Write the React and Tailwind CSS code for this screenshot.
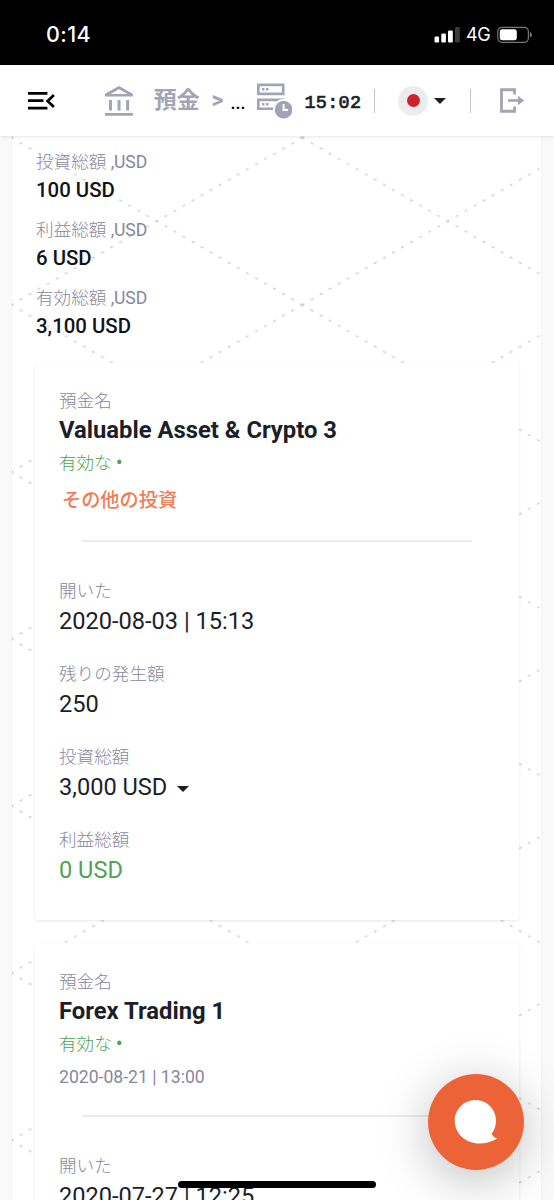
import React from 'react';

const deposits = [
  {
    name: 'Valuable Asset & Crypto 3',
    status: '有効な',
    link: 'その他の投資',
    rows: [
      { label: '開いた', value: '2020-08-03 | 15:13' },
      { label: '残りの発生額', value: '250' },
      { label: '投資総額', value: '3,000 USD', dropdown: true },
      { label: '利益総額', value: '0 USD', green: true },
    ],
  },
  {
    name: 'Forex Trading 1',
    status: '有効な',
    date: '2020-08-21 | 13:00',
    rows: [{ label: '開いた', value: '2020-07-27 | 12:25' }],
  },
];

const totals = [
  { label: '投資総額', value: '100 USD' },
  { label: '利益総額', value: '6 USD' },
  { label: '有効総額', value: '3,100 USD' },
];

const Caret = ({ className }) => (
  <svg className={className} width="12" height="6" viewBox="0 0 12 6">
    <path d="M0 0h12L6 6z" fill="currentColor" />
  </svg>
);

const StatusBar = () => (
  <div className="h-[65px] shrink-0 bg-black text-white flex items-center justify-between pl-[46px] pr-[21px] pt-1">
    <span className="font-['Inter'] font-medium text-[21.5px] tracking-[0.4px]">0:14</span>
    <div className="flex items-center">
      <svg width="26" height="16" viewBox="0 0 26 16" fill="#fff">
        <rect x="0.5" y="9.5" width="4.6" height="6" rx="1.2" />
        <rect x="7.3" y="6.5" width="4.6" height="9" rx="1.2" />
        <rect x="14" y="3.5" width="4.8" height="12" rx="1.2" />
        <rect x="21" y="0" width="4.8" height="15.5" rx="1.2" fill="#3b3b3b" />
      </svg>
      <span className="font-['Inter'] text-[18px] ml-[6px] mr-[7px] w-[24px] tracking-[-0.5px]">4G</span>
      <svg width="36" height="18" viewBox="0 0 36 18">
        <rect x="0.8" y="1.3" width="30.6" height="15" rx="4.2" fill="none" stroke="#777" strokeWidth="1.2" />
        <rect x="2.8" y="3.3" width="17" height="11" rx="2.4" fill="#fff" />
        <path d="M33 6c2.6 1 2.6 4.6 0 5.6z" fill="#777" />
      </svg>
    </div>
  </div>
);

const Header = () => (
  <header className="relative z-10 h-[71px] shrink-0 bg-white flex items-center pl-7 pr-[29px] text-[#a3a3b8] shadow-[0_1px_3px_rgba(0,0,0,0.1)]">
    <svg width="28" height="20" viewBox="0 0 28 20" fill="none" stroke="#000" strokeWidth="2.7">
      <path d="M0 2.3h19.500M0 9.7h15.500M0 17.2h19.500M26 4l-6.300 6L26 16" />
    </svg>
    <svg className="ml-[49px] mt-px" width="28" height="31" viewBox="0 0 28 31" fill="currentColor">
      <path
        d="M14 0l14 7.8V10.6H0V7.8zM14 3.2L5.5 8h17zM4 14h3v10.500H4zM12.600 14h3v10.500h-3zM21.200 14h3v10.500h-3zM0 27h28v2.800H0z"
        fillRule="evenodd"
      />
    </svg>
    <span className="ml-[21px] w-[48px] text-[23px] leading-none font-bold font-['Roboto','Noto_Sans_CJK_JP',sans-serif]">預金</span>
    <span className="ml-[10px] w-[13px] font-['Roboto',sans-serif] font-bold text-[23px] leading-none">&gt;</span>
    <span className="ml-[6px] w-[14px] mt-[3px] text-black font-medium text-[18px] font-['Roboto',sans-serif]">...</span>
    <svg className="ml-[12px]" width="36" height="36" viewBox="0 0 36 36">
      <g fill="none" stroke="currentColor" strokeWidth="2.7">
        <path d="M1.300 1.800h25v9h-25z" />
        <path d="M1.300 16.800h25v9h-25z" />
      </g>
      <path d="M5 5h2.500v2.500H5zM9 5h2.500v2.500H9zM5 20h2.500v2.500H5zM9 20h2.500v2.500H9z" fill="currentColor" />
      <circle cx="26.700" cy="26.700" r="9.800" fill="currentColor" stroke="#fff" strokeWidth="1.800" />
      <path d="M26.700 21v6h4.500" fill="none" stroke="#fff" strokeWidth="2" />
    </svg>
    <span className="ml-[12px] w-[58px] mt-[7px] text-[#1c1e28] font-medium text-[18.5px] leading-none font-['Liberation_Mono',monospace] [-webkit-text-stroke:0.7px] tracking-[0.3px]">15:02</span>
    <span className="ml-[12px] w-px h-6 bg-[#c5c5cf]" />
    <span className="ml-[23px] size-[30px] shrink-0 rounded-full bg-[#ececec] flex items-center justify-center">
      <span className="size-[13px] rounded-full bg-[#d0202f]" />
    </span>
    <Caret className="ml-[6px] text-[#1c1e28]" />
    <span className="ml-[24px] w-px h-6 bg-[#c5c5cf]" />
    <svg className="ml-[29px]" width="25" height="25" viewBox="0 0 25 25" fill="none" stroke="currentColor">
      <path d="M14.600 6.500V1.700H1.500v21.600h13.100v-4.800" strokeWidth="2.800" />
      <path d="M8 12.500h11" strokeWidth="2.600" />
      <path d="M18 7.800l6.300 4.700-6.300 4.700z" fill="currentColor" stroke="none" />
    </svg>
  </header>
);

// dashed rhombus net behind the cards
const Pattern = () => (
  <svg className="absolute inset-0 w-full h-full" fill="none">
    <defs>
      <pattern id="net" x="-0.700" y="1.700" width="291" height="167.100" patternUnits="userSpaceOnUse">
        <g stroke="#c9c9cd" strokeWidth="1.300" strokeDasharray="3 7.430" strokeDashoffset="0.700">
          <path d="M0 0L145.500 83.550" />
          <path d="M291 0L145.500 83.550" />
          <path d="M0 167.100L145.500 83.550" />
          <path d="M291 167.100L145.500 83.550" />
        </g>
      </pattern>
    </defs>
    <rect width="100%" height="100%" fill="url(#net)" />
  </svg>
);

const DepositCard = ({ deposit }) => (
  <div className="bg-white rounded-[3px] px-6 pt-[25px] pb-[34px] shadow-[0_1px_3px_rgba(40,40,80,0.11)]">
    <div className="h-[26px] leading-[27px] text-[17.6px] text-[#87879a] font-light">預金名</div>
    <div className="h-[32px] leading-[32px] text-[23.8px] font-bold text-[#1c1e28]">{deposit.name}</div>
    <div className="h-[35px] leading-[34px] text-[17.6px] text-[#4fa351] font-light">
      {deposit.status} <span className="font-bold">•</span>
    </div>
    {deposit.link && (
      <div className="h-[37px] leading-[39px] pl-[3px] text-[19.2px] font-medium text-[#ee7e56]">{deposit.link}</div>
    )}
    {deposit.date && (
      <div className="h-[31px] leading-[31px] text-[17.6px] text-[#87879a]">{deposit.date}</div>
    )}
    <div className="mx-[23px] mt-[22px] h-[2px] bg-[#ebebed]" />
    <div className="mt-[36px] flex flex-col gap-6">
      {deposit.rows.map((row) => (
        <div key={row.label} className="h-[59px]">
          <div className="h-[27px] leading-[27px] text-[17.6px] text-[#87879a] font-light">{row.label}</div>
          <div className={`h-[32px] leading-[32px] text-[23.6px] flex items-center ${row.green ? 'text-[#4fa351]' : 'text-[#1c1e28]'}`}>
            {row.value}
            {row.dropdown && <Caret className="ml-[10px] mt-[3px]" />}
          </div>
        </div>
      ))}
    </div>
  </div>
);

export default function App() {
  return (
    <div className="relative h-[1200px] overflow-hidden flex flex-col bg-[#f9f9fa] font-['Roboto','Noto_Sans_CJK_JP',sans-serif]">
      <StatusBar />
      <Header />
      <main className="relative flex-1 min-h-0 ml-[11px] mr-[12px] bg-white border-x border-[#f3f3f5]">
        <Pattern />
        <div className="relative pl-[23px] pr-[22px] pt-[12px]">
          {totals.map((t) => (
            <div key={t.label} className="h-[68px] pl-px">
              <div className="h-[28px] leading-[28px] text-[17.6px] text-[#87879a] font-light">
                {t.label} <span className="font-normal tracking-[-0.1px]">,USD</span>
              </div>
              <div className="h-[29px] leading-[29px] text-[20.4px] font-medium text-[#111318]">{t.value}</div>
            </div>
          ))}
          <div className="mt-[11px] flex flex-col gap-6">
            {deposits.map((d) => (
              <DepositCard key={d.name} deposit={d} />
            ))}
          </div>
        </div>
      </main>

      {/* chat button */}
      <button className="absolute left-[428px] top-[1074px] size-[96px] rounded-full bg-[#ec6337] shadow-[0_10px_50px_rgba(0,0,0,0.26)] flex items-center justify-center">
        <svg width="44" height="46" viewBox="0 0 44 46" fill="#fff">
          <path d="M21.500 1C33 1 42 10.500 42 21.500c0 5.500-1.800 10-4.500 13.500 1.500 2.200 3.200 3.700 5.500 4.500-5 3.500-11.500 5-17.500 5C12 44.500.7 35 .7 21.500.7 10.500 10 1 21.500 1z" />
        </svg>
      </button>
      {/* home indicator */}
      <div className="absolute left-[178px] top-[1181px] w-[198px] h-[7px] rounded-full bg-black" />
    </div>
  );
}
